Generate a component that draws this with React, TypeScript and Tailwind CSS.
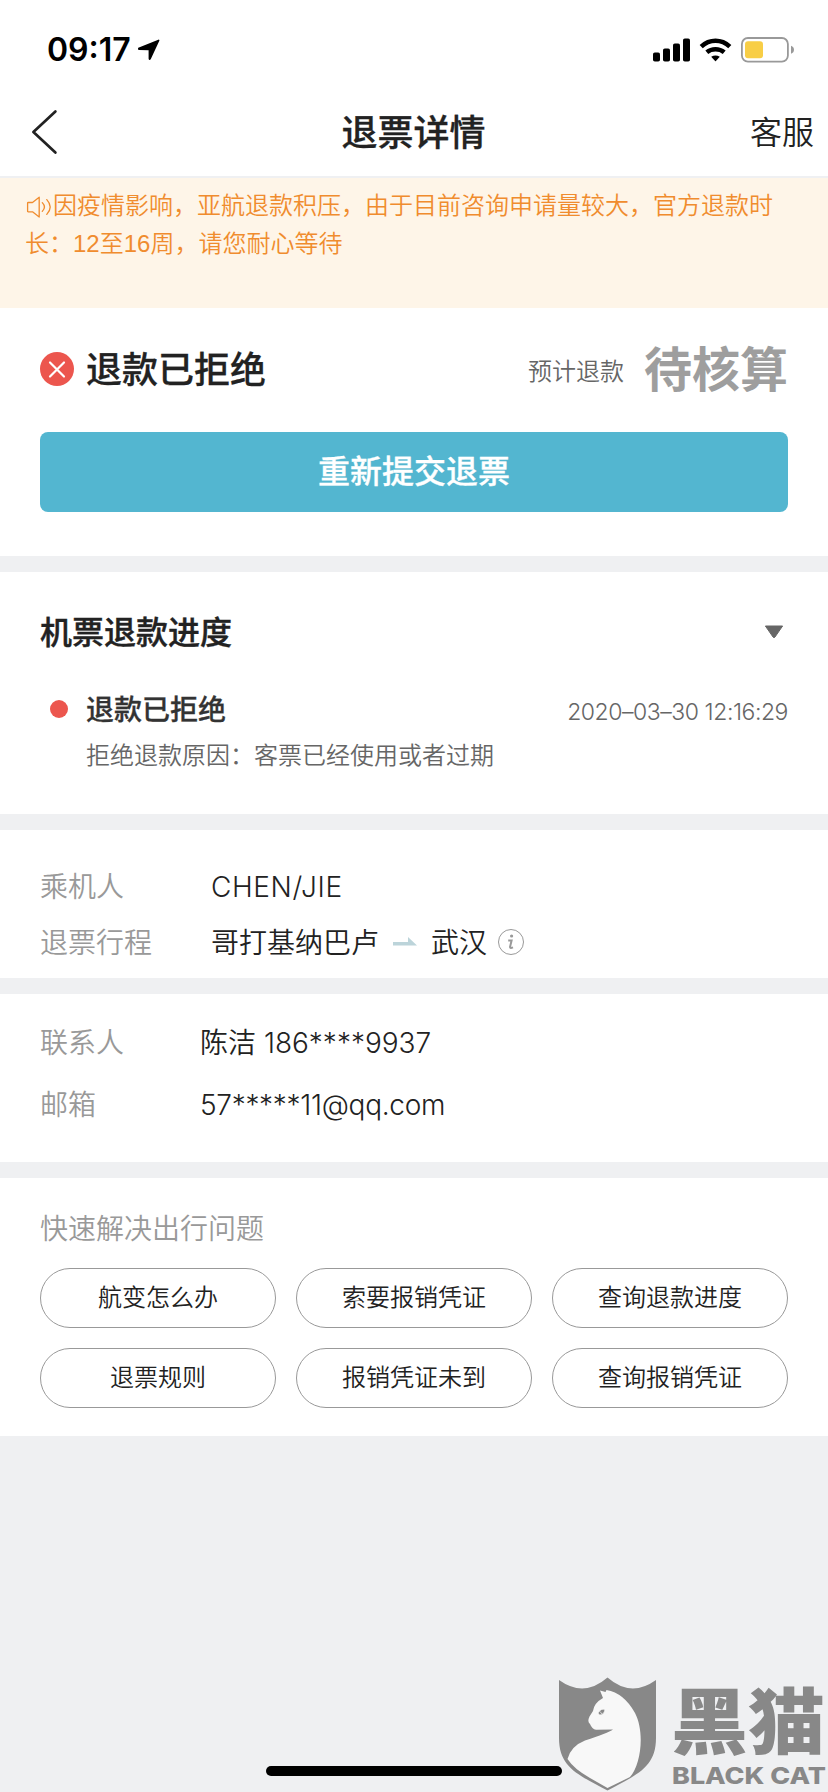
import type { ReactNode } from "react";

const quickLinks = [
  "航变怎么办",
  "索要报销凭证",
  "查询退款进度",
  "退票规则",
  "报销凭证未到",
  "查询报销凭证",
];

function StatusBar() {
  return (
    <div className="flex h-[88px] items-center justify-between pt-[11px] pr-[34px] pl-[47px]">
      <div className="flex items-center gap-[7px]">
        <span className="w-[84px] text-[32px] leading-[40px] font-semibold whitespace-nowrap text-black">
          09:17
        </span>
        <svg width="22" height="22" viewBox="0 0 22 22">
          <path
            d="M20.6 1.4 12 19.8Q11.5 20.6 11.4 19.6V11.2Q11.4 10.4 10.6 10.4L1.2 10.2Q.2 9.9 1.2 9.3Z"
            fill="#000"
            stroke="#000"
            strokeWidth="1.6"
            strokeLinejoin="round"
          />
        </svg>
      </div>
      <div className="flex items-center">
        <svg width="37" height="24" viewBox="0 0 37 24">
          <rect x="0" y="14.5" width="7" height="9" rx="1.8" />
          <rect x="10" y="10.5" width="7" height="13" rx="1.8" />
          <rect x="20" y="5.5" width="7" height="18" rx="1.8" />
          <rect x="30" y="0.5" width="7" height="23" rx="1.8" />
        </svg>
        <svg className="ml-[9px]" width="33" height="24" viewBox="0 0 33 24">
          <g fill="none" stroke="#000" strokeWidth="4.6">
            <path d="M2.2 8.6Q8.5 2.8 16.5 2.8T30.8 8.6" />
            <path d="M7.8 14.2Q11.5 11.2 16.5 11.2T25.2 14.2" />
          </g>
          <path d="M12.2 18.8Q16.5 16 20.8 18.8L16.9 23Q16.5 23.4 16.1 23Z" />
        </svg>
        <svg className="ml-[9px]" width="53" height="26" viewBox="0 0 53 26">
          <rect x="0.9" y="1" width="46" height="23.6" rx="6" fill="#fff" stroke="#999" strokeWidth="1.8" />
          <rect x="4" y="4.2" width="18" height="17" rx="3" fill="#f8ce46" />
          <path d="M50 8.8Q53 10 53 12.8T50 16.8Z" fill="#999" />
        </svg>
      </div>
    </div>
  );
}

function NavBar() {
  return (
    <div className="grid h-[88px] grid-cols-3 items-center pr-[14px] pl-[30px]">
      <svg width="28" height="46" viewBox="0 0 28 46">
        <path
          d="M25.4 2.4 3.4 23 25.4 43.6"
          fill="none"
          stroke="#222"
          strokeWidth="2.7"
          strokeLinecap="round"
          strokeLinejoin="round"
        />
      </svg>
      <h1 className="mt-[2px] -ml-[17px] text-center text-[36px] leading-[44px] font-medium text-[#222] [-webkit-text-stroke:0.3px]">
        退票详情
      </h1>
      <span className="mt-[2px] text-right text-[32px] leading-[44px] text-[#222]">客服</span>
    </div>
  );
}

function Notice() {
  return (
    <div className="h-[130px] bg-[#fef5e8] pt-[9px] pl-[26px] text-[24px] leading-[38px] whitespace-nowrap text-[#f08c2e]">
      <p className="flex items-center">
        <svg
          className="mt-[2px]"
          width="27"
          height="24"
          viewBox="0 0 27 24"
          fill="none"
          stroke="#f08c2e"
          strokeWidth="1.3"
          strokeLinejoin="round"
          strokeLinecap="round"
        >
          <path d="M2.2 7.5H6.5L13.2 2.2V22L6.5 16.8H2.2Q1.6 16.8 1.6 16.2V8.1Q1.6 7.5 2.2 7.5Z" />
          <path d="M16.3 7.6Q20.6 12 16.3 16.4M20.8 4.6Q27.6 12 20.8 19.4" />
        </svg>
        因疫情影响，亚航退款积压，由于目前咨询申请量较大，官方退款时
      </p>
      <p className="-ml-px font-['Liberation_Sans','Noto_Sans_CJK_SC',sans-serif]">
        长：12至16周，请您耐心等待
      </p>
    </div>
  );
}

function RefundStatus() {
  return (
    <section className="h-[248px] bg-white px-[40px] pt-[31px]">
      <div className="flex h-[60px] items-center">
        <svg width="34" height="34" viewBox="0 0 34 34">
          <circle cx="17" cy="17" r="17" fill="#ec564e" />
          <path d="M10 10.5 24 24.5M24 10.5 10 24.5" stroke="#fff" strokeWidth="2.2" strokeLinecap="round" />
        </svg>
        <h2 className="mt-px ml-[12px] text-[36px] leading-[44px] font-medium text-[#222] [-webkit-text-stroke:0.3px]">
          退款已拒绝
        </h2>
        <span className="mt-[6px] ml-auto text-[24px] leading-[32px] text-[#666]">预计退款</span>
        <span className="mt-px ml-[20px] text-[48px] leading-[56px] font-bold text-[#9e9e9e]">待核算</span>
      </div>
      <button className="mt-[33px] flex h-[80px] w-full items-center justify-center rounded-lg bg-[#53b6d0] text-[32px] font-medium text-white [-webkit-text-stroke:0.3px]">
        重新提交退票
      </button>
    </section>
  );
}

function Progress() {
  return (
    <section className="h-[242px] bg-white px-[40px] pt-[38px]">
      <div className="flex h-[44px] items-center justify-between">
        <h2 className="mt-[2px] text-[32px] leading-[44px] font-medium text-[#222] [-webkit-text-stroke:0.4px]">
          机票退款进度
        </h2>
        <svg className="mr-[4px]" width="20" height="14" viewBox="0 0 20 14">
          <path d="M1.4 1H18.6L11 12Q10 13.2 9 12Z" fill="#666" stroke="#666" strokeLinejoin="round" />
        </svg>
      </div>
      <div className="mt-[35px] flex h-[40px] items-center">
        <i className="ml-[10px] size-[18px] rounded-full bg-[#ec564e]" />
        <h3 className="mt-[2px] ml-[18px] text-[28px] leading-[40px] font-medium text-[#333] [-webkit-text-stroke:0.3px]">
          退款已拒绝
        </h3>
        <time className="mt-[6px] ml-auto text-[23px] leading-[32px] tracking-[-0.45px] text-[#666]">
          2020–03–30 12:16:29
        </time>
      </div>
      <p className="mt-[11px] pl-[46px] text-[24px] leading-[32px] text-[#666]">
        拒绝退款原因：客票已经使用或者过期
      </p>
    </section>
  );
}

function Row({ label, labelWidth, children }: { label: string; labelWidth: string; children: ReactNode }) {
  return (
    <div className="flex h-[40px] items-center text-[28px] leading-[40px] text-[#222]">
      <span className={`shrink-0 text-[#999] ${labelWidth}`}>{label}</span>
      {children}
    </div>
  );
}

function Passenger() {
  return (
    <section className="flex h-[148px] flex-col gap-[16px] bg-white px-[40px] pt-[37px]">
      <Row label="乘机人" labelWidth="w-[171px]">
        <span className="tracking-[0.6px]">CHEN/JIE</span>
      </Row>
      <Row label="退票行程" labelWidth="w-[171px]">
        <span>哥打基纳巴卢</span>
        <svg className="mb-[2px] ml-[14px]" width="24" height="10" viewBox="0 0 24 10">
          <path d="M0 5H15V0L24 8.6H0Z" fill="#bcd4da" />
        </svg>
        <span className="ml-[14px]">武汉</span>
        <span className="mb-[2px] ml-[11px] flex size-[26px] items-center justify-center rounded-full border-[1.5px] border-[#999]">
          <svg width="10" height="16" viewBox="0 0 10 16" fill="none" stroke="#999">
            <circle cx="5.6" cy="2" r="1.6" fill="#999" stroke="none" />
            <path d="M2.2 6.6H5.6L4 13Q4 14.6 7 13.4" strokeWidth="2" />
          </svg>
        </span>
      </Row>
    </section>
  );
}

function Contact() {
  return (
    <section className="flex h-[168px] flex-col gap-[22px] bg-white px-[40px] pt-[29px]">
      <Row label="联系人" labelWidth="w-[160px]">
        陈洁 186****9937
      </Row>
      <Row label="邮箱" labelWidth="w-[160px]">
        <span className="tracking-[-0.3px]">57*****11@qq.com</span>
      </Row>
    </section>
  );
}

function QuickLinks() {
  return (
    <section className="h-[258px] bg-white px-[40px] pt-[31px]">
      <h2 className="text-[28px] leading-[40px] text-[#999]">快速解决出行问题</h2>
      <div className="mt-[19px] grid grid-cols-3 gap-[20px]">
        {quickLinks.map((text) => (
          <button
            key={text}
            className="h-[60px] rounded-full border border-[#999] text-[24px] leading-[32px] text-[#222]"
          >
            {text}
          </button>
        ))}
      </div>
    </section>
  );
}

function Watermark() {
  return (
    <div className="absolute top-[1676px] left-[558px] flex h-[116px] w-[270px]">
      <svg className="shrink-0" width="99" height="116" viewBox="0 0 99 116">
        <path
          d="M1 4Q26 22 49.5 1.5Q73 22 98 4V62C98 92 78 99 49.5 114.5C21 99 1 92 1 62Z"
          fill="#888"
        />
        <path
          d="M49.5 112 32 102Q16 93 9.5 83Q13 70 27 64.5Q50 57 55 53.5L38 53.8Q34 53 32 48Q29 46 31.5 40.5L35 35Q36 27 45 22L42 14.5 47.5 16 48.5 14Q66 17 77 37C87 56 83 89 72 101Q62 106 49.5 112Z"
          fill="#f8f8f8"
        />
        <path d="M40 37Q43 32 47 33.5Q46 39 41.5 39ZM42 35.5 44 38" fill="#888" stroke="#f8f8f8" strokeWidth=".7" />
      </svg>
      <div className="ml-[15px] flex flex-col items-start text-[#888]">
        <span className="mt-[10px] -ml-px h-[76px] origin-left scale-y-[0.93] text-[77px] leading-[72px] font-black whitespace-nowrap">
          黑猫
        </span>
        <span className="h-[28px] origin-left scale-x-[1.17] text-[23px] leading-[28px] font-extrabold whitespace-nowrap">
          BLACK CAT
        </span>
      </div>
    </div>
  );
}

export default function App() {
  return (
    <main className="relative h-[1792px] w-[828px] overflow-hidden bg-[#eff0f2] font-[Inter,'Noto_Sans_CJK_SC',sans-serif] font-[350]">
      <header className="border-b-2 border-[#eff0f2] bg-white">
        <StatusBar />
        <NavBar />
      </header>
      <Notice />
      <div className="flex flex-col gap-[16px]">
        <RefundStatus />
        <Progress />
        <Passenger />
        <Contact />
        <QuickLinks />
      </div>
      <div className="absolute top-[1766px] left-[266px] h-[10px] w-[296px] rounded-full bg-black" />
      <Watermark />
    </main>
  );
}
